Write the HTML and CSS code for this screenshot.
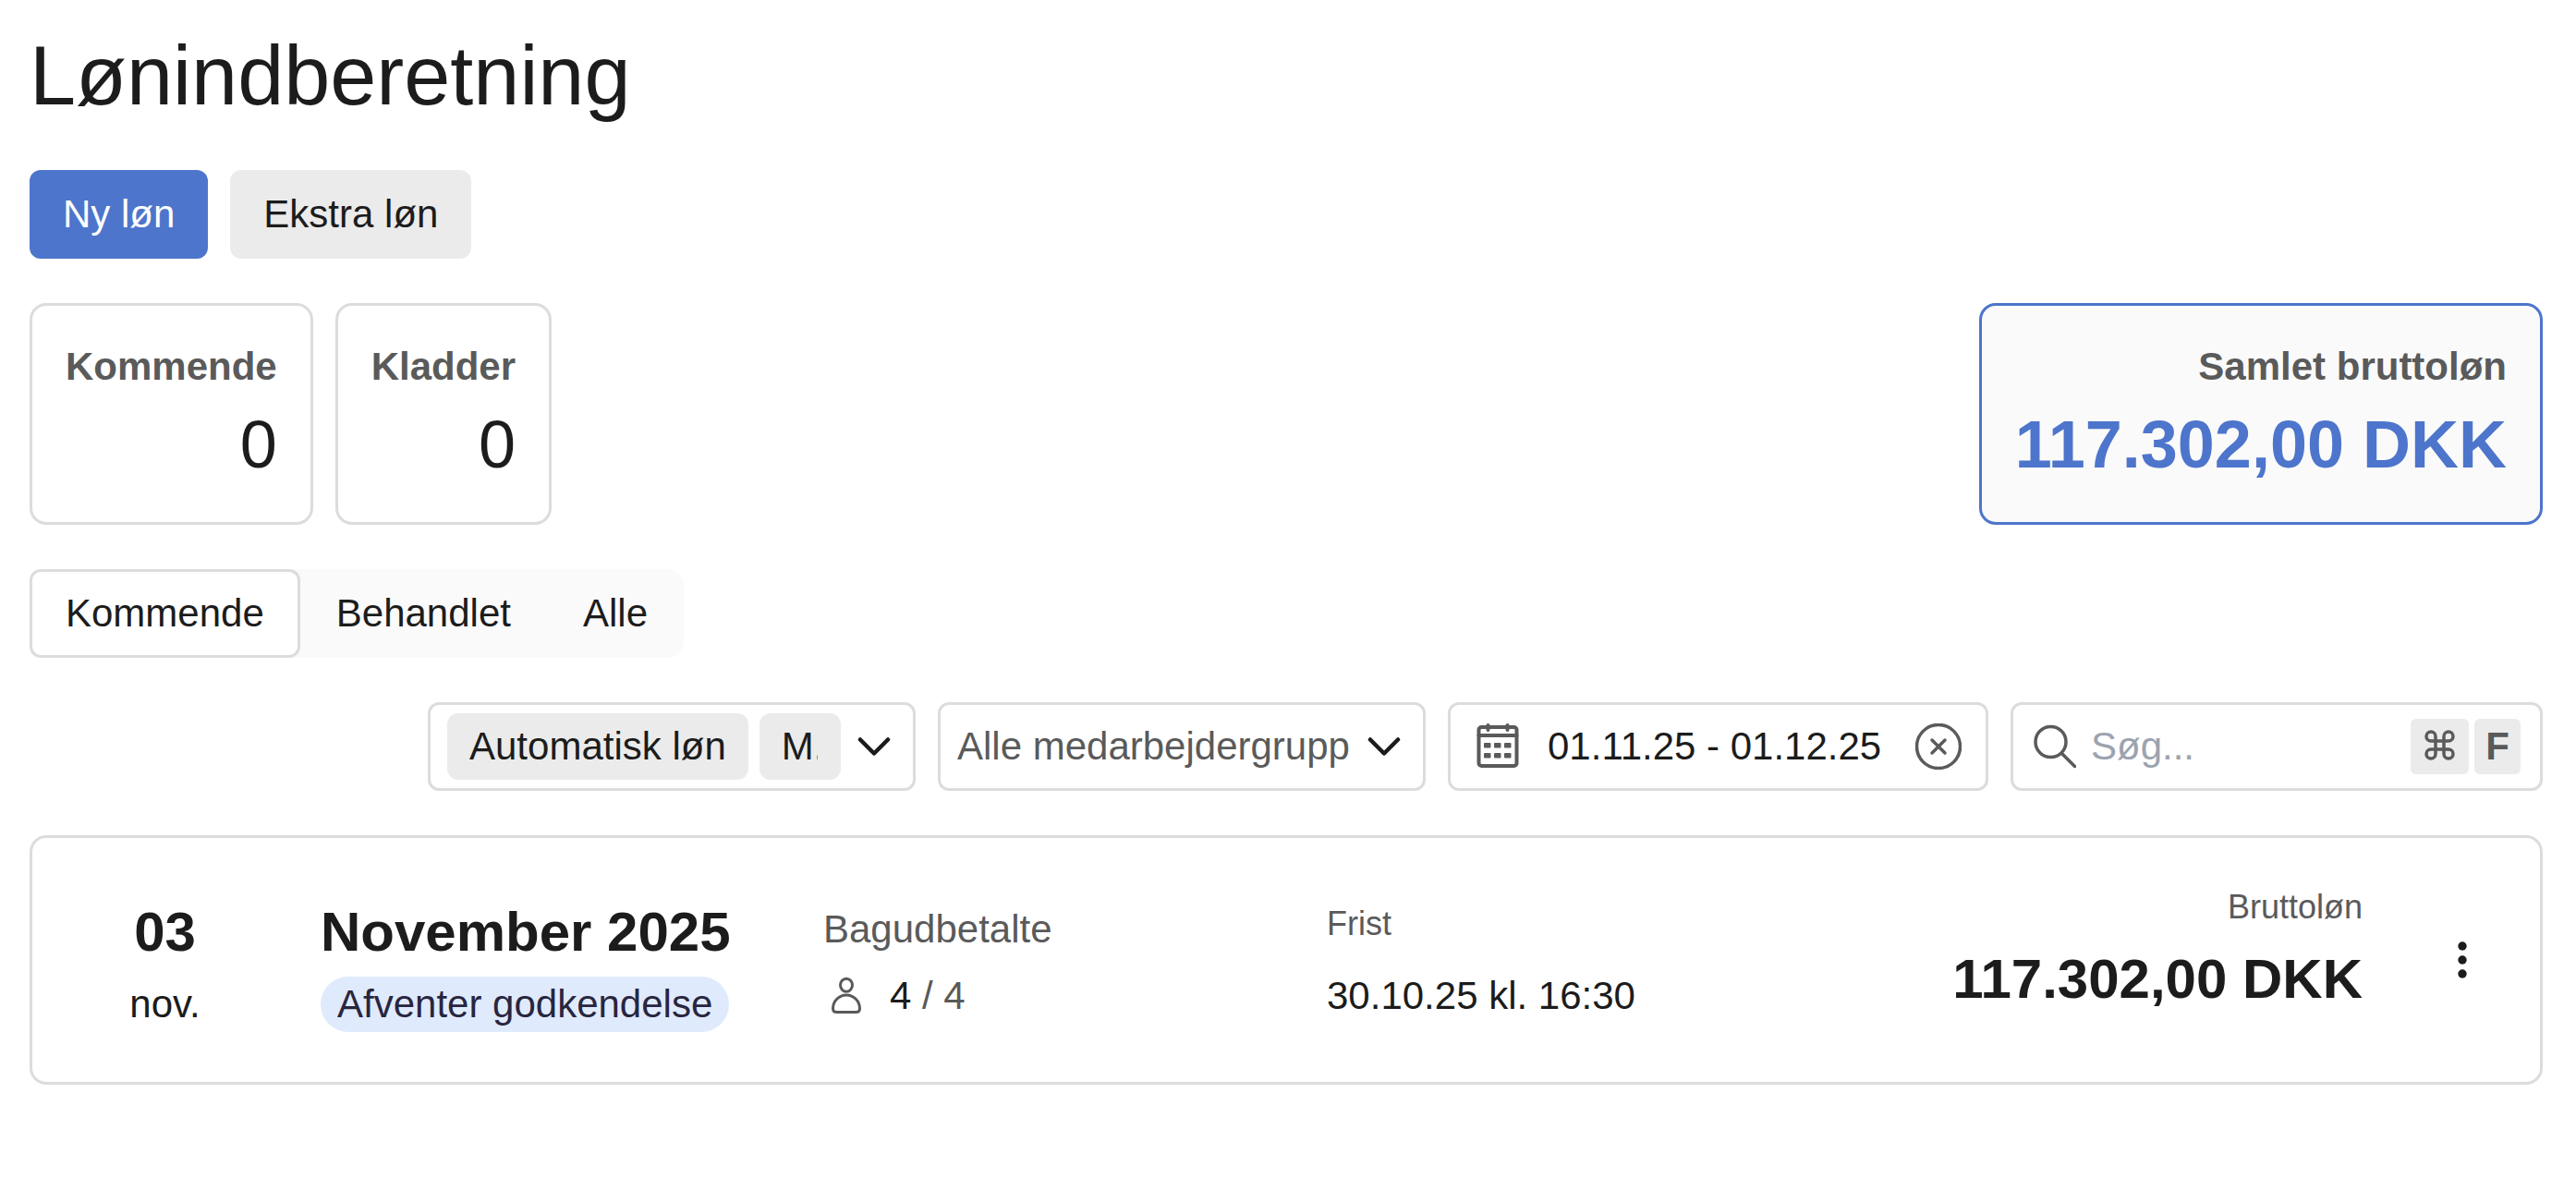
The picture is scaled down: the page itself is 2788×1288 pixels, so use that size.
FILE: index.html
```html
<!DOCTYPE html>
<html lang="da">
<head>
    <meta charset="utf-8">
    <title>Lønindberetning</title>
    <link rel="stylesheet" href="styles.css">
</head>
<body>
    <h1>Lønindberetning</h1>

    <div class="actions">
        <button type="button" class="btn btn-primary">Ny løn</button>
        <button type="button" class="btn">Ekstra løn</button>
    </div>

    <div class="stats">
        <div class="stat">
            <div class="stat-label">Kommende</div>
            <div class="stat-value">0</div>
        </div>
        <div class="stat">
            <div class="stat-label">Kladder</div>
            <div class="stat-value">0</div>
        </div>
        <div class="stat stat-total">
            <div class="stat-label">Samlet bruttoløn</div>
            <div class="stat-value">117.302,00 DKK</div>
        </div>
    </div>

    <div class="tabs">
        <a class="tab active">Kommende</a>
        <a class="tab">Behandlet</a>
        <a class="tab">Alle</a>
    </div>

    <div class="filters">
        <div class="field select">
            <div class="chips">
                <span class="chip">Automatisk løn</span>
                <span class="chip chip-cut"><span class="cut">M...</span></span>
            </div>
            <svg class="chevron" viewBox="0 0 36 24"><path d="M3 4.5 18 19.5 33 4.5"/></svg>
        </div>
        <div class="field select">
            <span class="select-text">Alle medarbejdergrupper</span>
            <svg class="chevron" viewBox="0 0 36 24"><path d="M3 4.5 18 19.5 33 4.5"/></svg>
        </div>
        <div class="field date">
            <svg class="icon-calendar" viewBox="0 0 46 48">
                <rect x="2.5" y="3" width="41" height="42" rx="3"/>
                <path d="M2.5 12H43.5M12.5 1V6M33.5 1V6"/>
                <g class="days">
                    <rect x="8" y="20" width="7.5" height="5.5" rx="1"/>
                    <rect x="19" y="20" width="7.5" height="5.5" rx="1"/>
                    <rect x="30" y="20" width="7.5" height="5.5" rx="1"/>
                    <rect x="8" y="31" width="7.5" height="5.5" rx="1"/>
                    <rect x="19" y="31" width="7.5" height="5.5" rx="1"/>
                    <rect x="30" y="31" width="7.5" height="5.5" rx="1"/>
                </g>
            </svg>
            <span class="date-text">01.11.25 - 01.12.25</span>
            <svg class="icon-clear" viewBox="0 0 50 50">
                <circle cx="25" cy="25" r="23.5"/>
                <path d="M18 18 32 32M32 18 18 32"/>
            </svg>
        </div>
        <div class="field search">
            <svg class="icon-search" viewBox="0 0 46 48">
                <circle cx="18.5" cy="19" r="16.5"/>
                <path d="M31 32 44.5 45.5"/>
            </svg>
            <span class="placeholder">Søg...</span>
            <span class="key">
                <svg class="icon-cmd" viewBox="0 0 33 33">
                    <path d="M12 12V7a5 5 0 1 0-5 5H26a5 5 0 1 0-5-5V26a5 5 0 1 0 5-5H7a5 5 0 1 0 5 5Z"/>
                </svg>
            </span>
            <span class="key">F</span>
        </div>
    </div>

    <div class="payroll">
        <div class="col-date">
            <div class="big">03</div>
            <div class="month">nov.</div>
        </div>
        <div class="col-period">
            <div class="big">November 2025</div>
            <span class="badge">Afventer godkendelse</span>
        </div>
        <div class="col-group">
            <div class="muted">Bagudbetalte</div>
            <div class="people">
                <svg class="icon-person" viewBox="0 0 32 42">
                    <ellipse cx="16" cy="9.3" rx="6.5" ry="7"/>
                    <path d="M16 20C8 20 1.5 26.500 1.5 34.5C1.5 37 3 38.5 5.5 38.5H26.5C29 38.5 30.5 37 30.5 34.5C30.5 26.500 24 20 16 20Z"/>
                </svg>
                <span>4 <span class="muted">/ 4</span></span>
            </div>
        </div>
        <div class="col-deadline">
            <div class="small">Frist</div>
            <div>30.10.25 kl. 16:30</div>
        </div>
        <div class="col-amount">
            <div class="small">Bruttoløn</div>
            <div class="big">117.302,00 DKK</div>
        </div>
        <svg class="icon-more" viewBox="0 0 12 42">
            <circle cx="6" cy="6" r="4.7"/>
            <circle cx="6" cy="21" r="4.7"/>
            <circle cx="6" cy="36" r="4.7"/>
        </svg>
    </div>
</body>
</html>
```

FILE: styles.css
```css
* {
    box-sizing: border-box;
}
body {
    margin: 0;
    padding: 22px 36px 0 32px;
    background: #fff;
    color: #1c1c1c;
    font-family: Helvetica, Arial, "Liberation Sans", sans-serif;
    font-size: 42px;
    line-height: 60px;
}
h1 {
    margin: 0 0 42px;
    font-size: 90px;
    font-weight: normal;
    line-height: 120px;
}
svg {
    display: block;
    flex: none;
    fill: none;
    stroke: #5a5a5a;
    stroke-width: 3.5;
    stroke-linecap: round;
    stroke-linejoin: round;
}
.actions {
    display: flex;
    gap: 24px;
    margin-bottom: 48px;
}
.btn {
    height: 96px;
    padding: 0 36px;
    border: none;
    border-radius: 12px;
    background: #ebebeb;
    color: inherit;
    font: inherit;
}
.btn-primary {
    background: #4d75cc;
    color: #fff;
}
.stats {
    display: flex;
    gap: 24px;
    margin-bottom: 48px;
}
.stat {
    height: 240px;
    padding: 36px;
    border: 3px solid #dcdcdc;
    border-radius: 18px;
    text-align: right;
}
.stat-label {
    color: #5a5a5a;
    font-weight: bold;
}
.stat-value {
    font-size: 72px;
    line-height: 108px;
}
.stat-total {
    margin-left: auto;
    border-color: #4d75cc;
    background: #fafafa;
}
.stat-total .stat-value {
    color: #4d75cc;
    font-weight: bold;
}
.tabs {
    display: flex;
    width: fit-content;
    margin-bottom: 48px;
    border-radius: 18px;
    background: #fafafa;
}
.tab {
    height: 96px;
    padding: 15px 36px;
    border: 3px solid transparent;
    border-radius: 12px;
}
.tab.active {
    border-color: #dcdcdc;
    background: #fff;
}
.filters {
    display: flex;
    justify-content: flex-end;
    gap: 24px;
    margin-bottom: 48px;
}
.field {
    display: flex;
    align-items: center;
    height: 96px;
    border: 3px solid #dcdcdc;
    border-radius: 12px;
}
.select {
    justify-content: space-between;
    width: 528px;
    padding: 0 24px 0 18px;
}
.chips {
    display: flex;
    gap: 12px;
}
.chip {
    height: 72px;
    padding: 6px 24px;
    border-radius: 12px;
    background: #ebebeb;
    white-space: nowrap;
}
.chip-cut {
    width: 88px;
}
.cut {
    display: block;
    width: 39px;
    overflow: hidden;
}
.select-text {
    width: 426px;
    overflow: hidden;
    color: #5a5a5a;
    white-space: nowrap;
}
.chevron {
    width: 36px;
    height: 24px;
    stroke: #1c1c1c;
    stroke-width: 4.5;
}
.date {
    width: 585px;
    padding: 0 26px 0 28px;
}
.icon-calendar {
    width: 46px;
    height: 48px;
    margin-right: 31px;
    overflow: visible;
    stroke-width: 4;
}
.days {
    fill: #5a5a5a;
    stroke: none;
}
.icon-clear {
    width: 50px;
    height: 50px;
    margin-left: auto;
}
.search {
    width: 576px;
    padding: 0 21px 0 22px;
}
.icon-search {
    width: 46px;
    height: 48px;
}
.placeholder {
    flex: 1;
    margin-left: 16px;
    color: #9ca3af;
}
.key {
    display: flex;
    align-items: center;
    height: 60px;
    margin-left: 6px;
    padding: 0 12px;
    border-radius: 6px;
    background: #ebebeb;
    color: #5a5a5a;
    font-weight: bold;
}
.icon-cmd {
    width: 33px;
    height: 33px;
    margin: 0 3px 4px;
}
.payroll {
    display: grid;
    grid-template-columns: 312px 544px 545px 1fr auto 192px;
    height: 270px;
    border: 3px solid #dcdcdc;
    border-radius: 18px;
}
.big {
    font-size: 60px;
    font-weight: bold;
    line-height: 84px;
}
.small {
    color: #5a5a5a;
    font-size: 36px;
    line-height: 54px;
}
.muted {
    color: #5a5a5a;
}
.col-date {
    padding: 60px 25px 0 0;
    text-align: center;
}
.month {
    margin-top: 6px;
}
.col-period {
    padding-top: 60px;
}
.badge {
    display: block;
    width: fit-content;
    margin-top: 6px;
    padding: 0 18px;
    border-radius: 30px;
    background: #e0eafd;
    color: #28263f;
}
.col-group {
    padding-top: 69px;
}
.people {
    display: flex;
    align-items: center;
    gap: 31px;
    margin-top: 12px;
    padding-left: 9px;
}
.icon-person {
    width: 32px;
    height: 42px;
    stroke-width: 3;
}
.col-deadline {
    padding-top: 66px;
}
.col-deadline .small {
    margin-bottom: 21px;
}
.col-amount {
    grid-column: 5;
    padding-top: 48px;
    text-align: right;
}
.col-amount .small {
    margin-bottom: 9px;
}
.icon-more {
    width: 12px;
    height: 42px;
    align-self: center;
    margin-left: 102px;
    fill: #1c1c1c;
    stroke: none;
}
```
